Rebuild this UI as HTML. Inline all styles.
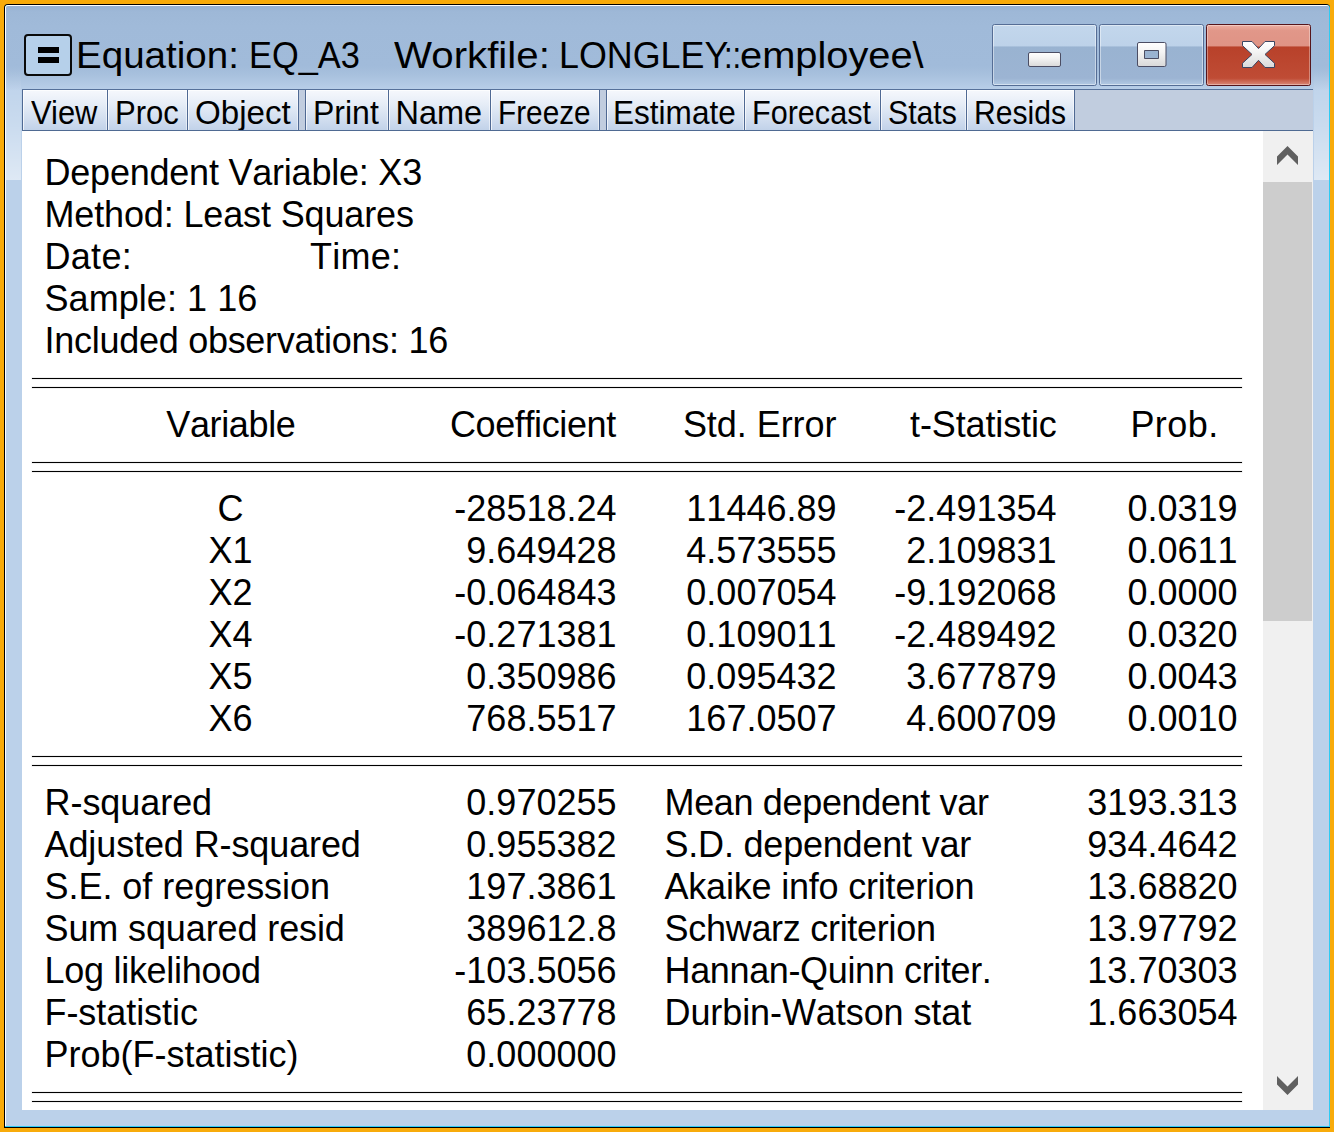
<!DOCTYPE html>
<html>
<head>
<meta charset="utf-8">
<title>Equation: EQ_A3</title>
<style>
html,body{margin:0;padding:0;}
body{width:1334px;height:1132px;background:#f8ab0a;position:relative;overflow:hidden;font-family:"Liberation Sans",sans-serif;color:#000;}
#wA{position:absolute;left:4px;top:4px;width:1326px;height:1124px;background:#000;border-radius:4px 4px 0 0;}
#wB{position:absolute;left:5px;top:5px;width:1325px;height:1122px;background:#2dcbf3;border-radius:3px 3px 0 0;}
#wC{position:absolute;left:5px;top:5px;width:1324px;height:1121px;background:#fff;border-radius:3px 3px 0 0;}
#wD{position:absolute;left:6px;top:6px;width:1323px;height:1120px;background:#bbd1ea;border-radius:2px 2px 0 0;}
#title{position:absolute;left:6px;top:6px;width:1323px;height:84px;border-radius:2px 2px 0 0;background:linear-gradient(#97b2d3 0px,#9eb8d7 6px,#a0bad9 20px,#a1bbda 60px,#a7c0dd 68px,#b2c9e4 78px,#b9cfe9 84px);}
.shine{position:absolute;top:70px;height:110px;background:linear-gradient(rgba(255,255,255,0),rgba(255,255,255,.22) 50%,rgba(255,255,255,.52));}
#ticon{position:absolute;left:24px;top:34px;width:48px;height:42px;box-sizing:border-box;border:2px solid #0a0a0a;border-radius:4px;background:#b6d0ea;}
#ticon i{position:absolute;left:12px;width:21px;height:6px;background:#000;}
#ttext{position:absolute;left:0;top:28px;width:1000px;height:56px;font-size:36.5px;line-height:56px;white-space:pre;}
.ts{position:absolute;top:0;transform-origin:0 50%;white-space:pre;}
#caps{position:absolute;left:985px;top:20px;}
#toolbar{position:absolute;left:22px;top:89px;width:1291px;height:42px;box-sizing:border-box;background:#c1cddf;border-top:1px solid #56719a;border-bottom:1px solid #4f6a92;}
.tb{position:absolute;top:0;height:40px;box-sizing:border-box;border:1px solid #4f6993;border-top:none;border-bottom:none;background:linear-gradient(#f6f8fc,#e6edf7 35%,#d3dff0 70%,#c1d2e9);box-shadow:inset 1px 1px 0 rgba(255,255,255,.7),inset -1px 0 0 rgba(255,255,255,.5);font-size:32.5px;line-height:40px;white-space:nowrap;overflow:hidden;}
.tb span{position:absolute;top:3px;transform-origin:0 50%;}
#content{position:absolute;left:22px;top:131px;width:1241px;height:979px;background:#fff;overflow:hidden;}
#sb{position:absolute;left:1263px;top:131px;width:50px;height:979px;background:#f0f0f0;}
#thumb{position:absolute;left:0;top:51px;width:49px;height:439px;background:#cdcdcd;}
#sb svg{position:absolute;left:0;}
.t{position:absolute;font-size:36px;line-height:42px;white-space:pre;font-kerning:none;}
.r{text-align:right;}
.c{text-align:center;}
.hl{position:absolute;left:10px;width:1210px;height:1px;background:#000;box-shadow:0 0 0 .5px rgba(0,0,0,.12);}
</style>
</head>
<body>
<div id="wA"></div><div id="wB"></div><div id="wC"></div><div id="wD"></div>
<div id="title"></div>
<div class="shine" style="left:6px;width:15px"></div>
<div class="shine" style="left:1314px;width:15px"></div>
<div id="ticon"><i style="top:11px"></i><i style="top:21px"></i></div>
<svg id="caps" width="335" height="72" viewBox="985 20 335 72">
<defs>
<linearGradient id="gB" x1="0" y1="0" x2="0" y2="1"><stop offset="0" stop-color="#c3d7ec"/><stop offset=".355" stop-color="#bdd2e9"/><stop offset=".365" stop-color="#99b3d1"/><stop offset=".88" stop-color="#9cb4d3"/><stop offset="1" stop-color="#b4cbe5"/></linearGradient>
<linearGradient id="gR" x1="0" y1="0" x2="0" y2="1"><stop offset="0" stop-color="#eeb0a4"/><stop offset=".1" stop-color="#e19789"/><stop offset=".355" stop-color="#df9385"/><stop offset=".365" stop-color="#b8412a"/><stop offset=".88" stop-color="#bf4c35"/><stop offset="1" stop-color="#dc8c7c"/></linearGradient>
<linearGradient id="gW" x1="0" y1="0" x2="0" y2="1"><stop offset="0" stop-color="#ffffff"/><stop offset=".4" stop-color="#f4f4f4"/><stop offset="1" stop-color="#d9d9d9"/></linearGradient>
</defs>
<rect x="992.5" y="24.5" width="104" height="61" rx="2" fill="url(#gB)" stroke="#556d95"/>
<rect x="993.5" y="25.5" width="102" height="59" rx="1" fill="none" stroke="rgba(255,255,255,.45)"/>
<rect x="1099.5" y="24.5" width="104" height="61" rx="2" fill="url(#gB)" stroke="#556d95"/>
<rect x="1100.5" y="25.5" width="102" height="59" rx="1" fill="none" stroke="rgba(255,255,255,.45)"/>
<rect x="1206.5" y="24.5" width="104" height="61" rx="2" fill="url(#gR)" stroke="#55151c"/>
<rect x="1207.5" y="25.5" width="102" height="59" rx="1" fill="none" stroke="rgba(255,255,255,.35)"/>
<rect x="1028.5" y="52.5" width="32" height="14" rx="1.5" fill="url(#gW)" stroke="#4b4d63"/>
<path fill-rule="evenodd" d="M1139 42.5h25.500a1.500 1.500 0 0 1 1.500 1.500v21a1.500 1.500 0 0 1 -1.500 1.500h-25.500a1.500 1.500 0 0 1 -1.500 -1.500v-21a1.500 1.500 0 0 1 1.500 -1.500zM1144.500 50.500v8h14v-8z" fill="url(#gW)" stroke="#4b4d63"/>
<path d="M1242.500 41.500H1252L1258.500 48.600L1265 41.500H1274.500V45.700L1265 54.450L1274.500 63.200V67.500H1265L1258.500 60.300L1252 67.500H1242.500V63.200L1252 54.450L1242.500 45.700Z" fill="url(#gW)" stroke="#3b4662" stroke-linejoin="round"/>
</svg>
<div id="ttext"><span class="ts" id="t0" style="left:76.20px;transform:scaleX(1.0559)">Equation: </span><span class="ts" id="t1" style="left:249.30px;transform:scaleX(0.9416)">EQ_A3   </span><span class="ts" id="t2" style="left:393.70px;transform:scaleX(1.1029)">Workfile: </span><span class="ts" id="t3" style="left:559.30px;transform:scaleX(0.9820)">LONGLEY</span><span class="ts" id="t4" style="left:723.60px;transform:scaleX(0.8500)">::</span><span class="ts" id="t5" style="left:739.90px;transform:scaleX(1.0904)">employee\</span></div>

<div id="toolbar">
<div class="tb" style="left:0px;width:86px"><span id="bView" style="left:8.20px;transform:scaleX(0.9508)">View</span></div>
<div class="tb" style="left:85px;width:81px"><span id="bProc" style="left:7.20px;transform:scaleX(0.9557)">Proc</span></div>
<div class="tb" style="left:165px;width:112px"><span id="bObject" style="left:6.80px;transform:scaleX(1.0196)">Object</span></div>
<div class="tb" style="left:283px;width:84px"><span id="bPrint" style="left:7.20px;transform:scaleX(0.9844)">Print</span></div>
<div class="tb" style="left:366px;width:103px"><span id="bName" style="left:6.50px;transform:scaleX(1.0000)">Name</span></div>
<div class="tb" style="left:468px;width:110px"><span id="bFreeze" style="left:7.20px;transform:scaleX(0.9156)">Freeze</span></div>
<div class="tb" style="left:584px;width:139px"><span id="bEstimate" style="left:6.40px;transform:scaleX(0.9708)">Estimate</span></div>
<div class="tb" style="left:722px;width:137px"><span id="bForecast" style="left:7.20px;transform:scaleX(0.9407)">Forecast</span></div>
<div class="tb" style="left:858px;width:87px"><span id="bStats" style="left:6.90px;transform:scaleX(0.9296)">Stats</span></div>
<div class="tb" style="left:944px;width:109px"><span id="bResids" style="left:6.90px;transform:scaleX(0.9256)">Resids</span></div>
</div>
<div id="content">
<div class="t" style="left:22.50px;top:21px;letter-spacing:-0.219px">Dependent Variable: X3</div>
<div class="t" style="left:22.50px;top:63px;letter-spacing:-0.140px">Method: Least Squares</div>
<div class="t" style="left:22.50px;top:105px;letter-spacing:0.295px">Date: </div>
<div class="t" style="left:288.00px;top:105px;letter-spacing:0.250px">Time:</div>
<div class="t" style="left:22.50px;top:147px;letter-spacing:0.055px">Sample: 1 16</div>
<div class="t" style="left:22.50px;top:189px;letter-spacing:-0.275px">Included observations: 16</div>
<div class="hl" style="top:247px"></div>
<div class="hl" style="top:256px"></div>
<div class="t" style="left:144.30px;top:273px;letter-spacing:-0.371px">Variable</div>
<div class="t" style="left:427.90px;top:273px;letter-spacing:-0.380px">Coefficient</div>
<div class="t" style="left:660.90px;top:273px;letter-spacing:-0.044px">Std. Error</div>
<div class="t" style="left:888.00px;top:273px;letter-spacing:-0.120px">t-Statistic</div>
<div class="t" style="left:1108.40px;top:273px;letter-spacing:0.450px">Prob.</div>
<div class="hl" style="top:331px"></div>
<div class="hl" style="top:340px"></div>
<div class="t c" style="left:108.5px;width:200px;top:357px">C</div>
<div class="t r" style="left:294.5px;width:300px;top:357px">-28518.24</div>
<div class="t r" style="left:514.5px;width:300px;top:357px">11446.89</div>
<div class="t r" style="left:734.5px;width:300px;top:357px">-2.491354</div>
<div class="t r" style="left:915.5px;width:300px;top:357px">0.0319</div>
<div class="t c" style="left:108.5px;width:200px;top:399px">X1</div>
<div class="t r" style="left:294.5px;width:300px;top:399px">9.649428</div>
<div class="t r" style="left:514.5px;width:300px;top:399px">4.573555</div>
<div class="t r" style="left:734.5px;width:300px;top:399px">2.109831</div>
<div class="t r" style="left:915.5px;width:300px;top:399px">0.0611</div>
<div class="t c" style="left:108.5px;width:200px;top:441px">X2</div>
<div class="t r" style="left:294.5px;width:300px;top:441px">-0.064843</div>
<div class="t r" style="left:514.5px;width:300px;top:441px">0.007054</div>
<div class="t r" style="left:734.5px;width:300px;top:441px">-9.192068</div>
<div class="t r" style="left:915.5px;width:300px;top:441px">0.0000</div>
<div class="t c" style="left:108.5px;width:200px;top:483px">X4</div>
<div class="t r" style="left:294.5px;width:300px;top:483px">-0.271381</div>
<div class="t r" style="left:514.5px;width:300px;top:483px">0.109011</div>
<div class="t r" style="left:734.5px;width:300px;top:483px">-2.489492</div>
<div class="t r" style="left:915.5px;width:300px;top:483px">0.0320</div>
<div class="t c" style="left:108.5px;width:200px;top:525px">X5</div>
<div class="t r" style="left:294.5px;width:300px;top:525px">0.350986</div>
<div class="t r" style="left:514.5px;width:300px;top:525px">0.095432</div>
<div class="t r" style="left:734.5px;width:300px;top:525px">3.677879</div>
<div class="t r" style="left:915.5px;width:300px;top:525px">0.0043</div>
<div class="t c" style="left:108.5px;width:200px;top:567px">X6</div>
<div class="t r" style="left:294.5px;width:300px;top:567px">768.5517</div>
<div class="t r" style="left:514.5px;width:300px;top:567px">167.0507</div>
<div class="t r" style="left:734.5px;width:300px;top:567px">4.600709</div>
<div class="t r" style="left:915.5px;width:300px;top:567px">0.0010</div>
<div class="hl" style="top:625px"></div>
<div class="hl" style="top:634px"></div>
<div class="t" style="left:22.50px;top:651px;letter-spacing:-0.055px">R-squared</div>
<div class="t r" style="left:294.5px;width:300px;top:651px">0.970255</div>
<div class="t" style="left:642.50px;top:651px;letter-spacing:-0.341px">Mean dependent var</div>
<div class="t r" style="left:915.5px;width:300px;top:651px">3193.313</div>
<div class="t" style="left:22.50px;top:693px;letter-spacing:-0.106px">Adjusted R-squared</div>
<div class="t r" style="left:294.5px;width:300px;top:693px">0.955382</div>
<div class="t" style="left:642.50px;top:693px;letter-spacing:-0.200px">S.D. dependent var</div>
<div class="t r" style="left:915.5px;width:300px;top:693px">934.4642</div>
<div class="t" style="left:22.50px;top:735px;letter-spacing:-0.035px">S.E. of regression</div>
<div class="t r" style="left:294.5px;width:300px;top:735px">197.3861</div>
<div class="t" style="left:642.50px;top:735px;letter-spacing:-0.200px">Akaike info criterion</div>
<div class="t r" style="left:915.5px;width:300px;top:735px">13.68820</div>
<div class="t" style="left:22.50px;top:777px;letter-spacing:-0.113px">Sum squared resid</div>
<div class="t r" style="left:294.5px;width:300px;top:777px">389612.8</div>
<div class="t" style="left:642.50px;top:777px;letter-spacing:-0.288px">Schwarz criterion</div>
<div class="t r" style="left:915.5px;width:300px;top:777px">13.97792</div>
<div class="t" style="left:22.50px;top:819px;letter-spacing:-0.277px">Log likelihood</div>
<div class="t r" style="left:294.5px;width:300px;top:819px">-103.5056</div>
<div class="t" style="left:642.50px;top:819px;letter-spacing:-0.358px">Hannan-Quinn criter.</div>
<div class="t r" style="left:915.5px;width:300px;top:819px">13.70303</div>
<div class="t" style="left:22.50px;top:861px;letter-spacing:-0.060px">F-statistic</div>
<div class="t r" style="left:294.5px;width:300px;top:861px">65.23778</div>
<div class="t" style="left:642.50px;top:861px;letter-spacing:-0.082px">Durbin-Watson stat</div>
<div class="t r" style="left:915.5px;width:300px;top:861px">1.663054</div>
<div class="t" style="left:22.50px;top:903px;letter-spacing:0.000px">Prob(F-statistic)</div>
<div class="t r" style="left:294.5px;width:300px;top:903px">0.000000</div>
<div class="hl" style="top:961px"></div>
<div class="hl" style="top:970px"></div>
</div>
<div id="sb"><div id="thumb"></div>
<svg width="50" height="40" style="top:0" viewBox="1263 131 50 40"><path d="M1287.500 146L1298 156.400V165L1287.500 154.600L1277 165V156.400Z" fill="#606060"/></svg>
<svg width="50" height="40" style="top:939px" viewBox="1263 1070 50 40"><path d="M1287.500 1095L1298 1084.600V1076L1287.500 1086.400L1277 1076V1084.600Z" fill="#606060"/></svg>
</div>
</body>
</html>
